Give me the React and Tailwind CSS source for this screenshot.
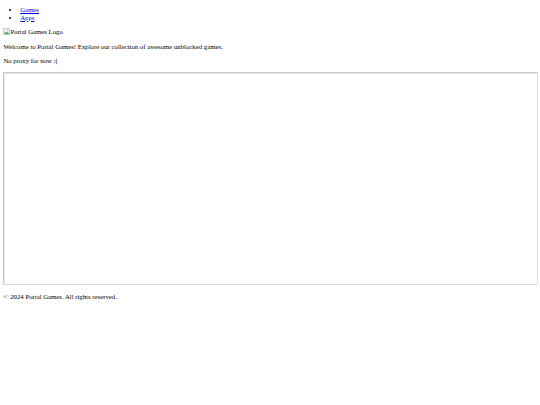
export default function App() {
  return (
    <div className="px-[3.375px] font-['Liberation_Serif',serif] text-[6.75px] leading-[7.8px] text-black">
      <nav>
        <ul className="mt-[5.75px] mb-[6.75px] list-disc pl-[16.875px]">
          <li>
            <a href="#" className="text-[#0000ee] underline">Games</a>
          </li>
          <li>
            <a href="#" className="text-[#0000ee] underline">Apps</a>
          </li>
        </ul>
      </nav>

      <div className="flex items-end">
        <svg width="7" height="7" viewBox="0 0 16 16" className="mb-[1px]">
          <rect x="1.5" y="1.5" width="13" height="13" fill="#f1f1f1" stroke="#9a9a9a" />
          <path d="M2 14 L6 8 L9 11 L11 9 L14 13 L14 14 Z" fill="#4caf50" />
          <circle cx="11" cy="5" r="1.6" fill="#7fb2e5" />
        </svg>
        <span>Portal Games Logo</span>
      </div>

      <p className="my-[6.75px]">Welcome to Portal Games! Explore our collection of awesome unblocked games.</p>
      <p className="my-[6.75px]">No proxy for now :(</p>

      <div className="h-[212.6px] w-[535px] border border-t-[#c8c8c8] border-l-[#c8c8c8] border-r-[#dcdcdc] border-b-[#dcdcdc] bg-white shadow-[inset_1px_1px_0_#e8e8e8]" />

      <footer className="mt-[8.4px]">
        <p>© 2024 Portal Games. All rights reserved.</p>
      </footer>
    </div>
  );
}
